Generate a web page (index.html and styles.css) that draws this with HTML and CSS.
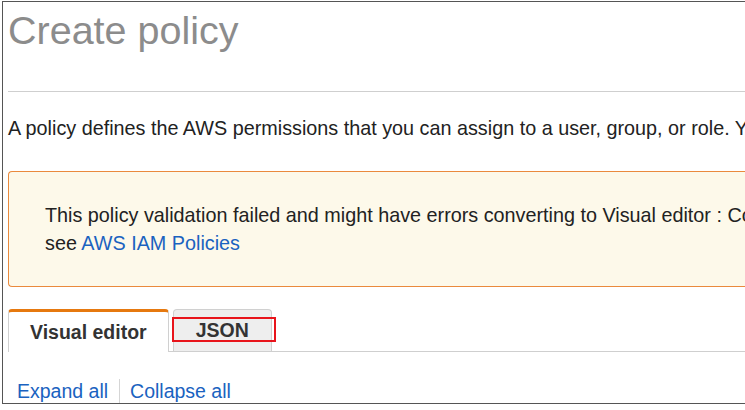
FILE: index.html
```html
<!DOCTYPE html>
<html lang="en">
<head>
<meta charset="utf-8">
<title>Create policy</title>
<link rel="stylesheet" href="styles.css">
</head>
<body>
<div class="frame">
  <h1 class="title">Create policy</h1>
  <hr class="rule">
  <p class="intro">A policy defines the AWS permissions that you can assign to a user, group, or role. You can create and edit a policy in the visual editor and using JSON.</p>
  <div class="alert">
    <p class="alert-line">This policy validation failed and might have errors converting to Visual editor : Convert the policy to valid JSON. For more information,</p>
    <p class="alert-line">see <a class="link" href="#">AWS IAM Policies</a></p>
  </div>
  <div class="tabs">
    <div class="tab tab-active">Visual editor</div>
    <div class="tab tab-json">JSON<span class="highlight"></span></div>
  </div>
  <div class="actions">
    <a class="link action" href="#">Expand all</a>
    <a class="link action action-sep" href="#">Collapse all</a>
  </div>
</div>
</body>
</html>
```
FILE: styles.css
```css
html, body {
  margin: 0;
  padding: 0;
  background: #fff;
  overflow: hidden;
}
body {
  font-family: "Liberation Sans", Arial, Helvetica, sans-serif;
  color: #222;
}
.frame {
  margin: 1px 0 0 2px;
  border: 1px solid #555;
  border-right: 0;
  height: 401px;
  width: 820px;
  padding-left: 5px;
  overflow: hidden;
  white-space: nowrap;
}
.title {
  margin: 5px 0 0;
  font-size: 39.5px;
  line-height: 46px;
  font-weight: normal;
  color: #8c8c8c;
}
.rule {
  margin: 38px 0 0;
  border: 0;
  border-top: 1px solid #cfcfcf;
  height: 0;
}
.intro {
  margin: 23.5px 0 0;
  font-size: 19.8px;
  line-height: 24px;
  color: #222;
}
.alert {
  margin-top: 31.5px;
  border: 1px solid #ea8a3d;
  border-right: 0;
  border-radius: 4px 0 0 4px;
  background: #fdf9ea;
  padding: 28.5px 0 28.5px 36px;
}
.alert-line {
  margin: 0;
  font-size: 19.8px;
  line-height: 28.5px;
  color: #222;
}
.link {
  color: #1a62c0;
  text-decoration: none;
}
.tabs {
  margin-top: 22px;
  display: flex;
  align-items: flex-end;
  border-bottom: 1px solid #cfcfcf;
}
.tab {
  font-size: 19.5px;
  line-height: 24px;
  font-weight: bold;
  color: #333;
  border: 1px solid #d0d0d0;
  border-bottom: 0;
  border-radius: 4px 4px 0 0;
}
.tab-active {
  border-top: 3px solid #e6790f;
  background: #fff;
  padding: 7.5px 21px 8.5px 21px;
  margin-bottom: -1px;
}
.tab-json {
  position: relative;
  margin-left: 4px;
  background: #eeeeee;
  padding: 8px 22px 9px;
}
.highlight {
  position: absolute;
  left: -2px;
  top: 7px;
  width: 100px;
  height: 21px;
  border: 2px solid #e8141b;
}
.actions {
  margin: 26.5px 0 0 9px;
  display: flex;
  font-size: 19.5px;
  line-height: 24px;
}
.action-sep {
  margin-left: 11px;
  padding-left: 10px;
  border-left: 1px solid #d5d5d5;
}
```
